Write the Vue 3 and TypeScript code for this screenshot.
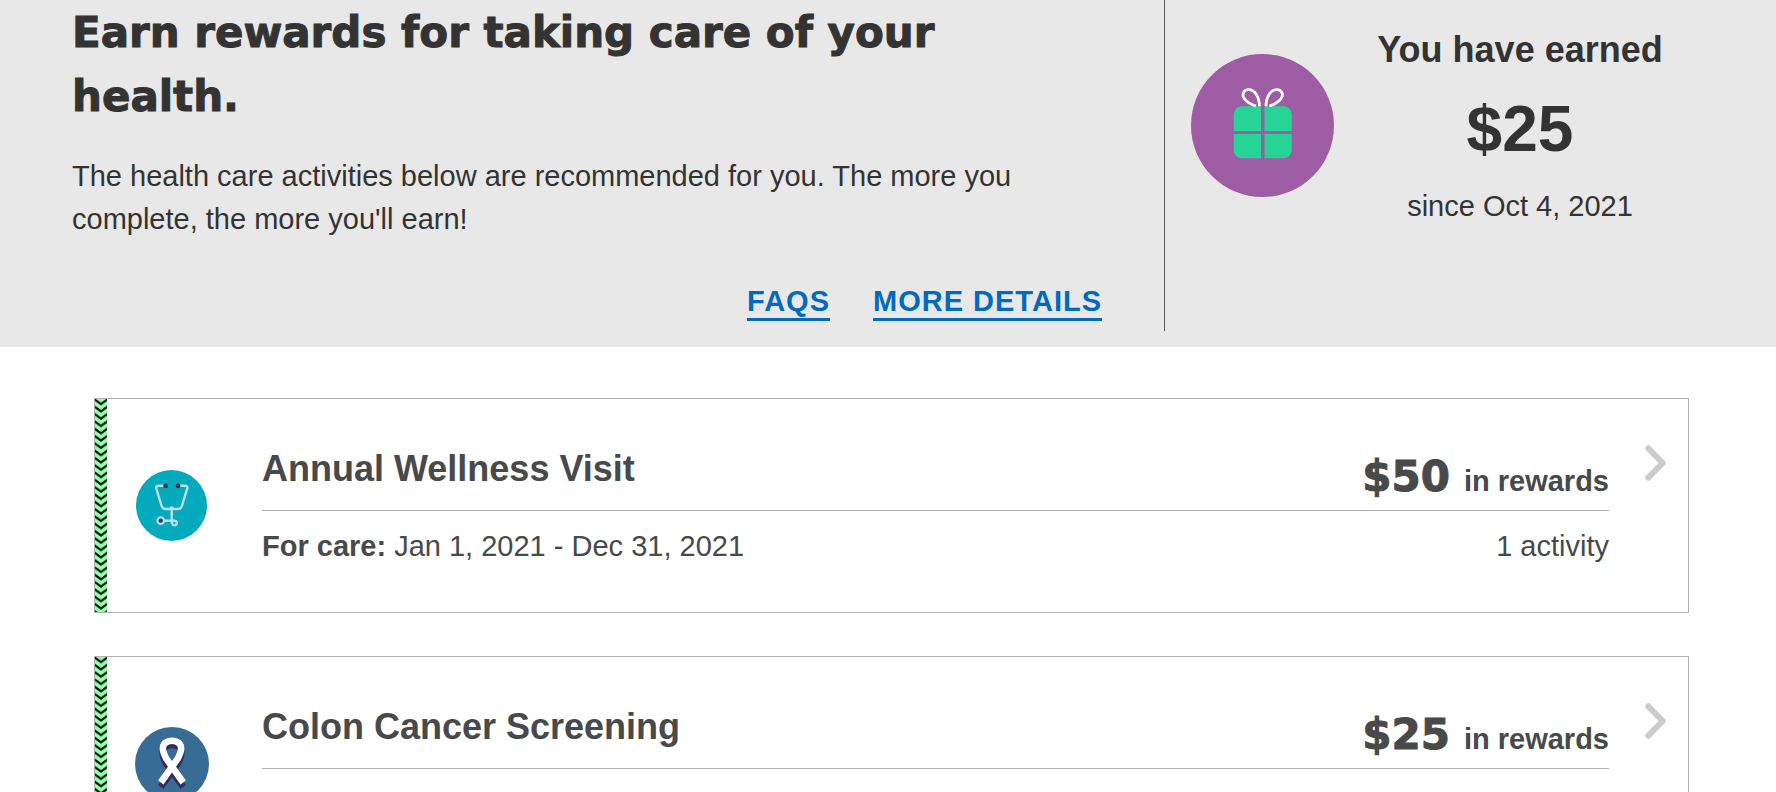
<script setup lang="ts">
interface Activity {
  id: string
  title: string
  reward: string
  period: string
  count: string
  icon: 'stethoscope' | 'ribbon'
}

const activities: Activity[] = [
  {
    id: 'wellness',
    title: 'Annual Wellness Visit',
    reward: '$50',
    period: 'Jan 1, 2021 - Dec 31, 2021',
    count: '1 activity',
    icon: 'stethoscope',
  },
  {
    id: 'colon',
    title: 'Colon Cancer Screening',
    reward: '$25',
    period: 'Jan 1, 2021 - Dec 31, 2021',
    count: '1 activity',
    icon: 'ribbon',
  },
]
</script>

<template>
  <div class="page">
    <header class="hero">
      <section class="intro">
        <h1>Earn rewards for taking care of your health.</h1>
        <p>The health care activities below are recommended for you. The more you complete, the more you'll earn!</p>
        <nav class="links">
          <a href="#faqs">FAQS</a>
          <a href="#details">MORE DETAILS</a>
        </nav>
      </section>
      <section class="earned">
        <svg class="gift" viewBox="0 0 143 143" aria-hidden="true">
          <circle cx="71.5" cy="71.5" r="71.5" fill="#9d5ca3" />
          <g fill="#26d496">
            <path d="M50.7 52.3H70V77H42.7V60.3a8 8 0 0 1 8-8z" />
            <path d="M73.5 52.3h19.2a8 8 0 0 1 8 8V77H73.5z" />
            <path d="M42.7 80H70v24.3H50.7a8 8 0 0 1-8-8z" />
            <path d="M73.5 80h27.2v16.3a8 8 0 0 1-8 8H73.5z" />
          </g>
          <g fill="none" stroke="#fff" stroke-width="2.8">
            <path d="M68.4 52.3C68.4 43 64 35.6 57.6 35.6C52.5 35.6 50.3 41 53.5 44.8C56.5 48.5 60 50.5 65 52" />
            <path d="M75 52.3C75 43 79.4 35.6 85.8 35.6C90.9 35.6 93.1 41 89.9 44.8C86.9 48.5 83.4 50.5 78.4 52" />
          </g>
        </svg>
        <div class="total">
          <h2>You have earned</h2>
          <strong>$25</strong>
          <p>since Oct 4, 2021</p>
        </div>
      </section>
    </header>

    <main class="cards">
      <a v-for="item in activities" :key="item.id" class="card" :href="'#' + item.id">
        <svg class="stripe" aria-hidden="true">
          <defs>
            <pattern :id="'chevrons-' + item.id" width="12" height="7.3" patternUnits="userSpaceOnUse">
              <rect width="12" height="8" fill="#90ffa8" />
              <path d="M-1 -7.3L6 -2.3L13 -7.3M-1 0L6 5L13 0M-1 7.3L6 12.3L13 7.3" fill="none" stroke="#0a1410" stroke-width="2.1" />
            </pattern>
          </defs>
          <rect width="100%" height="100%" :fill="'url(#chevrons-' + item.id + ')'" />
        </svg>

        <span class="badge">
          <svg v-if="item.icon === 'stethoscope'" class="stethoscope" viewBox="0 0 71 71" aria-hidden="true">
            <circle cx="35.5" cy="35.5" r="35.5" fill="#02aabb" />
            <g fill="none" stroke="#bfdcea" stroke-width="2.4" stroke-linecap="round" stroke-linejoin="round">
              <path d="M29 15.7H22.5Q19.6 15.7 20.3 18.7L25.6 36Q26.5 39 29.5 39H42Q45 39 45.9 36L51.2 18.7Q51.9 15.7 49 15.7H42.5" />
              <path d="M35.7 38V50.7M28.5 50.7H38.5Q41 50.7 40.8 53.2Q40.5 55.5 38.3 55.3Q35.7 55 35.7 50.7" />
              <circle cx="24.7" cy="50.7" r="3.2" />
            </g>
            <circle cx="35.7" cy="38.3" r="2.1" fill="#bfdcea" />
            <g fill="#303c5f">
              <circle cx="29.6" cy="15.9" r="2.4" />
              <circle cx="42" cy="15.9" r="2.4" />
              <circle cx="24.7" cy="50.7" r="2.1" />
            </g>
          </svg>
          <svg v-else class="ribbon" viewBox="0 0 74 74" aria-hidden="true">
            <circle cx="37" cy="37" r="37" fill="#396c95" />
            <g fill="none" stroke-width="6.6">
              <path stroke="#332d5a" d="M25.8 60L42.5 37Q49 26 44.5 20.5Q41.5 18 37 18Q32.5 18 29.5 20.5Q25 26 31.5 37L48.2 60" />
              <path stroke="#fff" d="M25.8 55.5L42.5 32Q48.5 21.5 44.5 16.5Q41.5 13.7 37 13.7Q32.5 13.7 29.5 16.5Q25.5 21.5 31.5 32L48.2 55.5" />
            </g>
          </svg>
        </span>

        <span class="body">
          <span class="top">
            <span class="title">{{ item.title }}</span>
            <span class="reward"><b>{{ item.reward }}</b><span>in rewards</span></span>
          </span>
          <span class="bottom">
            <span><b>For care:</b> {{ item.period }}</span>
            <span>{{ item.count }}</span>
          </span>
        </span>

        <svg class="arrow" viewBox="0 0 21 36" aria-hidden="true">
          <path d="M3.3 3.3L17.7 18L3.3 32.7" fill="none" stroke="#cbcbcb" stroke-width="6" stroke-linecap="round" stroke-linejoin="round" />
        </svg>
      </a>
    </main>
  </div>
</template>

<style>
body {
  margin: 0;
  background: #fff;
}
</style>

<style scoped>
.page {
  font-family: "Liberation Sans", Arial, sans-serif;
  font-size: 29px;
  line-height: 43px;
  color: #333;
}

h1,
h2,
p {
  margin: 0;
}

.hero {
  display: grid;
  grid-template-columns: 1164fr 612fr;
  padding-bottom: 16px;
  background: #e8e8e8;
}

.intro {
  padding: 1px 62px 10px 72px;
}

h1,
.reward b {
  font-family: "Arial Black", "DejaVu Sans", sans-serif;
  font-size: 42px;
  font-weight: 700;
  line-height: 64px;
  -webkit-text-stroke: 1px currentColor;
}

h1 {
  margin-bottom: 26px;
}

.links {
  display: flex;
  justify-content: flex-end;
  gap: 43px;
  margin-top: 44px;
}

.links a {
  border-bottom: 3px solid #0069c0;
  color: #0069c0;
  font-weight: 700;
  letter-spacing: 1px;
  line-height: 33px;
  text-decoration: none;
}

.earned {
  display: flex;
  align-items: flex-start;
  padding-right: 70px;
  border-left: 1px solid #555;
}

.gift {
  flex: none;
  width: 143px;
  height: 143px;
  margin: 54px 0 0 26px;
}

.total {
  flex: 1;
  padding-top: 23px;
  text-align: center;
}

h2 {
  font-size: 36px;
  line-height: 54px;
}

.total strong {
  display: block;
  margin: 4px 0 8px;
  font-size: 64px;
  line-height: 96px;
}

.cards {
  display: flex;
  flex-direction: column;
  gap: 43px;
  padding: 51px 87px 43px 94px;
}

.card {
  display: flex;
  border: 1px solid #b0b0b0;
  color: #48494a;
  text-decoration: none;
}

.stripe {
  flex: none;
  align-self: stretch;
  width: 12px;
  height: auto;
}

.badge {
  display: flex;
  flex: none;
  align-items: center;
  justify-content: center;
  width: 129px;
  margin-right: 26px;
}

.stethoscope {
  width: 71px;
  height: 71px;
}

.ribbon {
  width: 74px;
  height: 74px;
}

.body {
  flex: 1;
  padding: 43px 0 44px;
}

.top {
  display: flex;
  justify-content: space-between;
  padding-bottom: 1px;
  border-bottom: 1px solid #b0b0b0;
}

.title {
  font-size: 36px;
  font-weight: 700;
  line-height: 54px;
}

.reward {
  display: flex;
  align-items: baseline;
  gap: 14px;
  padding-top: 3px;
  font-weight: 700;
}

.bottom {
  display: flex;
  justify-content: space-between;
  padding-top: 14px;
}

.arrow {
  flex: none;
  width: 21px;
  height: 36px;
  margin: 46px 22px 0 36px;
}
</style>
